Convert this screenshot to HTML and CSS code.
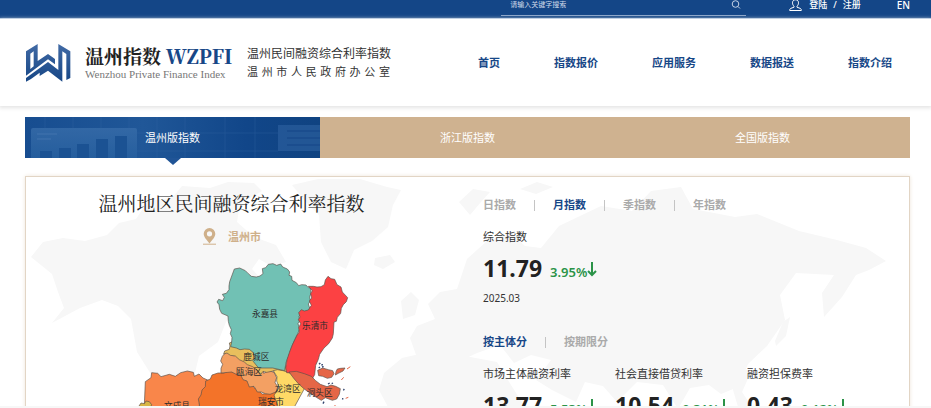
FILE: index.html
```html
<!DOCTYPE html>
<html lang="zh-CN">
<head>
<meta charset="utf-8">
<meta name="viewport" content="width=device-width, initial-scale=1">
<title>温州指数 WZPFI</title>
<link rel="stylesheet" href="styles.css">
</head>
<body>
<div class="page">
  <div class="topbar">
    <form class="search">
      <input class="search-input" type="text" placeholder="请输入关键字搜索" aria-label="请输入关键字搜索">
      <button class="search-button" type="button" aria-label="搜索">
        <svg width="10" height="10" viewBox="0 0 10 10" fill="none" stroke="currentColor" stroke-width="1"><circle cx="4.5" cy="4" r="3.3"/><path d="M7 6.500l2 2"/></svg>
      </button>
    </form>
    <div class="account">
      <svg class="user-icon" width="13" height="12" viewBox="0 1 13 12" fill="none" stroke="currentColor" stroke-width="1"><path d="M6.500.8c-2 0-3 1.200-3 3 0 1.400.6 2.600 1.500 3.400v1L1.500 9.500C.9 9.800.7 10.500.7 11.500h11.600c0-1-.2-1.700-.8-2L8 8.200v-1c.9-.8 1.500-2 1.500-3.400 0-1.800-1-3-3-3z"/></svg>
      <a href="#">登陆</a><span class="slash">/</span><a href="#">注册</a>
    </div>
    <a class="lang" href="#">EN</a>
  </div>

  <header class="header">
    <a class="brand" href="#">
      <svg class="logo" width="46" height="40" viewBox="74 127 138 120">
        <defs><linearGradient id="logo-fill" gradientUnits="userSpaceOnUse" x1="0" y1="130" x2="0" y2="243"><stop offset="0" stop-color="#416aa5"/><stop offset="1" stop-color="#164685"/></linearGradient></defs>
        <g fill="url(#logo-fill)" fill-rule="evenodd">
          <path d="M77 152L112 130V181L143 160L164 175V191L143 176L77 225ZM90 159V205L100 197V152Z"/>
          <path d="M77 243V232L143 184L174 208V130L210 152V232L198 238V160L186 152V243L143 210L118 226V216L92 235Z"/>
        </g>
      </svg>
      <span class="brand-name">
        <span class="brand-title">温州指数 <b>WZPFI</b></span>
        <span class="brand-sub">Wenzhou Private Finance Index</span>
      </span>
      <span class="brand-org">
        <span>温州民间融资综合利率指数</span>
        <span class="org-wide"><i>温</i><i>州</i><i>市</i><i>人</i><i>民</i><i>政</i><i>府</i><i>办</i><i>公</i><i>室</i></span>
      </span>
    </a>
    <nav class="nav">
      <a href="#">首页</a><a href="#">指数报价</a><a href="#">应用服务</a><a href="#">数据报送</a><a href="#">指数介绍</a>
    </nav>
  </header>

  <main class="main">
    <div class="editions">
      <button class="edition active" type="button">
        <svg class="edition-art" viewBox="0 0 295 41" preserveAspectRatio="none">
          <defs>
            <linearGradient id="art" x1="0" x2="1"><stop offset="0" stop-color="#174d90"/><stop offset=".4" stop-color="#205798"/><stop offset=".75" stop-color="#114689"/><stop offset="1" stop-color="#104381"/></linearGradient>
            <linearGradient id="card" x1="0" x2="0" y1="0" y2="1"><stop offset="0" stop-color="#366ba8"/><stop offset="1" stop-color="#27609f"/></linearGradient>
          </defs>
          <path fill="url(#art)" d="M0 0h295v41H0z"/>
          <path stroke="#3467a3" stroke-width="1" opacity=".35" d="M20 0v11M48 0v11M76 0v11M104 0v11M132 0v41M160 0v41M200 0v41M230 0v41M112 16H253M112 34H253"/>
          <path fill="url(#card)" opacity=".85" d="M6 13q0-2 2-2h102q2 0 2 2v28H6z"/>
          <path fill="#1b5293" d="M15 34h12v7H15zM34 31h12v10H34zM52 27h12v14H52zM71 22h12v19H71zM90 19h12v22H90z"/>
          <path stroke="#4274ae" d="M12 17h20M12 22h14"/>
          <path fill="#2b5e9c" opacity=".7" d="M253 8h42v26h-42z"/>
          <path stroke="#1b4d8e" stroke-width="2" d="M262 14h33M262 21h33M262 28h33"/>
        </svg>
        <span>温州版指数</span>
      </button>
      <button class="edition" type="button"><span>浙江版指数</span></button>
      <button class="edition" type="button"><span>全国版指数</span></button>
    </div>

    <section class="panel">
      <svg class="world" viewBox="25 176 885 230" preserveAspectRatio="xMidYMin slice" fill="#f7f7f7">
        <path d="M31 256l12-15 20-4 22 3 22-6 12-12 17-4 12-18 24-3 10-12 28 2 18-6 26 1 8 8-22 13-3 18 17 15 22 8 10 17-15 4-12-7-7 10 13 14-4 15-20 6-15 18-8 20-19 14-5 21-15 5 6 22 12 14-14-2-19-16-10-21-17-27-6-33-13-13-16-6-22 8-28 15 12-15-6-16-6-18z"/>
        <path d="M292 184l26-6 42 0 27 8 14 3-8 15-5 22-16 14-18 9-8 19-15-7-10-20-2-27-13-13zM375 257l15-3 5 7-12 7-9-4z"/>
        <path d="M410 337l7-12 18-7-7-15 12-12 17-3 10-30 20-18 24-8 14 13 16 2 18-22 42-20 31 5 19-20 30-4 12 22 42 8 22-3 42 17 38 9 29 8 20 13-17 9-13 5-14 22-18 20-2-24 12-18-38-2-16 22 5 25-18 26-19 18-10 23-17 7-12-9-19 3-12 21-15-24-26-3-20 20-14-16-18-4-9 20-24-12-16-10 15-20-20-5-17 8-14-18-23 8-19 9-11 15-22 3z"/>
        <path d="M384 372l18-15 35-8 28 6 32 6 14 23 14 22H388l-9-17zM401 300l10-9 8 8-4 15-12 4zM459 201l14-13 17 3-9 10-11 13zM520 188l17-7 16 5-17 7z"/>
        <path d="M775 340l8-19 7-5-4 19-10 10zM731 382l12-15 8 4-9 20 10 15h-14z"/>
      </svg>

      <div class="region">
        <h1 class="region-title">温州地区民间融资综合利率指数</h1>
        <div class="place">
          <svg width="15" height="17" viewBox="0 0 15 17"><path fill="#cfb08a" fill-rule="evenodd" d="M7.500 0a5.800 5.800 0 0 0-5.800 5.800C1.700 9.500 5 12 7.500 15.500 10 12 13.300 9.500 13.300 5.800A5.800 5.800 0 0 0 7.500 0zm0 3.200a2.600 2.600 0 1 1 0 5.200 2.600 2.600 0 0 1 0-5.200z"/><path stroke="#cfb08a" d="M1 16.200h13"/></svg>
          <span>温州市</span>
        </div>
        <svg class="map" viewBox="0 0 690 540" role="img" aria-label="温州市地图">
          <g stroke="#5a5048" stroke-width="2" stroke-linejoin="round">
            <path fill="#f9864a" d="M40 450L43 380l17-12 2-15 18 2 10 10 25-7 18 6 16-11 20-5 18 4 3 12 14-7 12 12 14 6-4 20-10 14-3 22-8 15 4 14v90H40z"/>
            <path fill="#d8b545" d="M24 453l6-9 10 2 5-8 10 2 7 9-5 12H24z"/>
            <path fill="#f37329" d="M224 378l14-6 5-12 18-6 18 0 12-6 18 4 13 8 10-2 7 14 10 6 12 1 8 19 10 6 15 13 15-1 12-10 15-4 8 15-5 30v90H205v-90l-3-15 8-12 3-15 10-10z"/>
            <path fill="#f3a063" d="M286 290l14 7 8 5 14-2 15 10 20 8 18 5 8 10 12 8 3 14 15-8 16 5 8 16-5 14 8 14-5 15-18 7-14-2-12-5-12 0-10-17-14 2-7-18-12-4-7-14-15-3-12-6-32 3 0-14 5-12-6-10 5-14z"/>
            <path fill="#e8bf5d" d="M295 264l9-4 17 6 13 3 14-3 15 2 10 10 6 15-7 7 8 14 9 10 25 3 29 1 15 3 14 12-1 8-28 1-16-4-20 4-11-3-8 11-10-15-13-10-16-6-9-8-15-7-12-11-15-2-10-7-10 3 3-9 14-5 2-10z"/>
            <path fill="#ffd966" d="M427 347l12-3 17 3 18 5 20 15 24 15 8 8-38 70-38 20-21-60 8-10 7-14-7-18 1-13z"/>
            <path fill="#71c1b4" d="M310 42l16-3 17 8 9 9 9 8 15 2 11-3 9-7-2-15 10-3 8-10 14-2 11 5 12-4 6 9 14 6 7 9-2 10 8 3 1 12 13 7 7 9 9-3 13 1 7 8 8 1-1 18-3 9 2 12-6 9 5 15-7 11-18 3-8 8 2 14-5 8 5 16-6 14-9 18-11 26-7 24-8 18-4 25-36-8-42 0-10-12-8-10 7-8-6-17-11-9-14-1-14 2-11-5-17-4 3-14 1-14-5-11 3-12-6-13-3-12-1-16-19-8-6-12-2-14-6-8 5-8 12 4 5-10-6-9 12-3 8-11 0-11 2-13z"/>
            <path fill="#fc4143" d="M532 94h15l11 2 12-1 10-6 3-14 8-11 9 7 11 2 7 16 12 7 4 15 16 17-4 12-9 9-6 11-2 15-10 12-3 12-7 2-2 35-3 13-11 17-14 13-13 19-4 15-8 18-3 28-8 14-11-2-15-6-20-6-14-5-16-1-3-14 4-25 7-21 9-23 14-29 7-10-2-13 6-12-7-12 5-8-4-13 8-9 9 4 12-3 9-14-6-13 7-9-3-13 5-9z"/>
            <path fill="#e56647" d="M474 351l22-2 24 7 21 8 13 13 14 11 20 7 12-5 14 4 14 7-3 17-8 14-13 4-21-8-12 8-15-9-19-13-16-11-18-16-14-16zM560 346l15-7 17 5 13 3 4 9-7 11-13 3-14-6-12-2zM615 350l4-8 10-2 13-1-6 9-14 7-9 5z"/>
          </g>
          <path stroke="#31456e" stroke-width="4" d="M564 328l4-4M571 330l5-1M563 339l4-3M573 336l5-1M591 387l5-3M602 386l4-2M637 406l3-4M576 446l3-6M633 431l4 1"/>
          <path stroke="#e56647" stroke-width="3" d="M648 342l10-7M631 375l7-8M644 430l8-3M611 450l4 6"/>
          <g class="map-labels">
            <text x="402" y="186">永嘉县</text><text x="552" y="221">乐清市</text><text x="376" y="315">鹿城区</text><text x="354" y="360">瓯海区</text><text x="470" y="410">龙湾区</text><text x="566" y="422">洞头区</text><text x="420" y="450">瑞安市</text><text x="138" y="462">文成县</text>
          </g>
        </svg>
      </div>

      <div class="data">
        <div class="switch">
          <button type="button">日指数</button><button class="on" type="button">月指数</button><button type="button">季指数</button><button type="button">年指数</button>
        </div>
        <div class="metric">
          <h2>综合指数</h2>
          <p class="value"><strong>11.79</strong><span class="change">3.95%<svg width="10" height="15" viewBox="0 0 10 15" fill="none" stroke="currentColor" stroke-width="2"><path d="M5 0v13M1 9l4 4 4-4"/></svg></span></p>
          <p class="date">2025.03</p>
        </div>
        <div class="switch second">
          <button class="on" type="button">按主体分</button><button type="button">按期限分</button>
        </div>
        <div class="metrics">
          <div class="metric"><h2>市场主体融资利率</h2><p class="value"><strong>13.77</strong><span class="change">5.53%<svg width="10" height="15" viewBox="0 0 10 15" fill="none" stroke="currentColor" stroke-width="2"><path d="M5 0v13M1 9l4 4 4-4"/></svg></span></p></div>
          <div class="metric"><h2>社会直接借贷利率</h2><p class="value"><strong>10.54</strong><span class="change">0.31%<svg width="10" height="15" viewBox="0 0 10 15" fill="none" stroke="currentColor" stroke-width="2"><path d="M5 0v13M1 9l4 4 4-4"/></svg></span></p></div>
          <div class="metric"><h2>融资担保费率</h2><p class="value"><strong>0.43</strong><span class="change">0.12%<svg width="10" height="15" viewBox="0 0 10 15" fill="none" stroke="currentColor" stroke-width="2"><path d="M5 0v13M1 9l4 4 4-4"/></svg></span></p></div>
        </div>
      </div>
    </section>
  </main>
  <footer class="bottom-edge"></footer>
</div>
</body>
</html>
```
FILE: styles.css
```css
* { box-sizing: border-box; }
body, h1, h2, p { margin: 0; }
body {
  font-family: "Noto Sans", "Noto Sans CJK SC", sans-serif;
  color: #333;
  background: #fff;
}
a { color: inherit; text-decoration: none; }
button { font: inherit; color: inherit; border: 0; padding: 0; background: none; cursor: pointer; }
svg { display: block; flex: none; }

.page { display: flex; flex-direction: column; height: 100vh; overflow: hidden; }

.topbar {
  flex: none;
  display: flex;
  justify-content: flex-end;
  height: 19px;
  padding-right: 21px;
  color: #fff;
  background: #144687;
  border-bottom: 1px solid #a9c3e2;
  font-size: 9px;
  line-height: 10px;
}
.search {
  display: flex;
  align-items: flex-start;
  width: 245px;
  height: 16px;
  padding: 0 5px 0 9px;
  border-bottom: 1px solid #8aa5c9;
}
.search-input {
  flex: 1;
  min-width: 0;
  height: 9px;
  padding: 0;
  border: 0;
  outline: 0;
  background: none;
  color: #fff;
  font: 7px/9px "Noto Sans CJK SC", sans-serif;
}
.search-input::placeholder { color: #d0dbea; opacity: 1; }
.search-button { color: #c5d3e6; }
.account { display: flex; margin-left: 43px; font-weight: 500; }
.user-icon { margin-right: 7px; }
.slash { margin: 0 6px; }
.lang { margin-left: 36px; font-size: 10px; font-weight: 500; }

.header {
  flex: none;
  display: flex;
  align-items: center;
  justify-content: space-between;
  height: 87px;
  padding: 0 39px 0 25px;
  box-shadow: 0 1px 4px 1px #e4e4e4;
}
.brand { display: flex; align-items: center; }
.brand-name { display: flex; flex-direction: column; width: 147px; margin-left: 14px; }
.brand-title { font-family: "Noto Serif CJK SC", "Liberation Serif", "Noto Sans CJK SC", serif; font-size: 19px; line-height: 22px; font-weight: 700; color: #222; white-space: nowrap; }
.brand-title b { color: #174787; }
.brand-sub { font-family: "Liberation Serif", serif; font-size: 11px; line-height: 14px; color: #777; white-space: nowrap; }
.brand-org { display: flex; flex-direction: column; width: 143px; margin-left: 15px; font-size: 12px; line-height: 18px; white-space: nowrap; }
.org-wide { display: flex; justify-content: space-between; font-size: 11px; }
.org-wide i { font-style: normal; }
.nav { display: flex; gap: 54px; font-size: 11px; line-height: 16px; font-weight: 700; color: #174787; white-space: nowrap; }

.main { flex: 1; min-height: 0; padding: 11px 21px 0 25px; }
.editions { display: grid; grid-template-columns: repeat(3, 1fr); }
.edition {
  position: relative;
  height: 41px;
  color: #fff;
  background: #cfb290;
  font-size: 11px;
  line-height: 16px;
}
.edition span { position: relative; }
.edition-art { position: absolute; inset: 0; width: 100%; height: 100%; }
.edition.active::after {
  content: "";
  position: absolute;
  top: 100%;
  left: 50%;
  margin-left: -8px;
  border: 8px solid transparent;
  border-top: 7px solid #205496;
  border-bottom: 0;
}

.panel {
  position: relative;
  display: grid;
  grid-template-columns: 411fr 472fr;
  margin-top: 18px;
  border: 1px solid #e2d5c5;
  box-shadow: 0 0 4px #eee5da;
}
.world { position: absolute; inset: 0; width: 100%; height: 230px; }
.region, .data { position: relative; }
.region { display: flex; flex-direction: column; align-items: center; padding-top: 14px; }
.region-title {
  font-family: "Liberation Serif", "Noto Serif CJK SC", "Noto Sans CJK SC", serif;
  font-size: 19px;
  line-height: 28px;
  font-weight: 400;
  color: #222;
  white-space: nowrap;
}
.place { display: flex; align-items: center; gap: 11px; margin: 8px 0 10px; height: 18px; color: #cfb08a; font-size: 11px; font-weight: 700; }
.map { width: 230px; margin-left: 28px; }
.map-labels { fill: #2b2b2b; font-size: 26px; text-anchor: middle; }

.data { padding: 20px 0 0 46px; font-size: 11px; line-height: 16px; }
.switch { display: flex; align-items: center; font-weight: 700; color: #aaa; }
.switch .on { color: #174787; }
.switch button + button { display: flex; align-items: center; }
.switch button + button::before { content: ""; width: 1px; height: 11px; margin: 0 18px; background: #c4c4c4; }
.switch.second { margin-top: 28px; }
.metric { margin-top: 16px; }
.metric h2 { font-size: 11px; font-weight: 400; line-height: 16px; white-space: nowrap; }
.value { display: flex; align-items: baseline; gap: 8px; margin-top: 8px; line-height: 30px; }
.value strong { font-size: 23px; color: #222; }
.change { display: flex; align-items: baseline; font-size: 13px; font-weight: 600; color: #2b9348; }
.date { margin-top: 3px; font-size: 10px; line-height: 16px; }
.metrics { display: grid; grid-template-columns: repeat(3, 31%); }

.bottom-edge { position: relative; flex: none; height: 2px; background: #f7f7f7; }
```
